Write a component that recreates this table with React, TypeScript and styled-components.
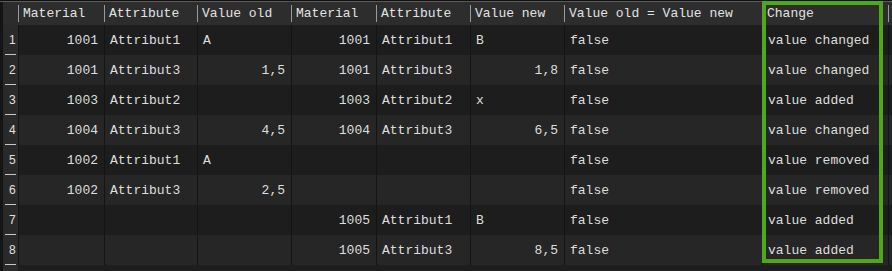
import React from 'react'
import styled, { createGlobalStyle } from 'styled-components'

type Row = {
  matOld: string
  attrOld: string
  valOld: string
  matNew: string
  attrNew: string
  valNew: string
  same: string
  change: string
}

const rows: Row[] = [
  { matOld: '1001', attrOld: 'Attribut1', valOld: 'A', matNew: '1001', attrNew: 'Attribut1', valNew: 'B', same: 'false', change: 'value changed' },
  { matOld: '1001', attrOld: 'Attribut3', valOld: '1,5', matNew: '1001', attrNew: 'Attribut3', valNew: '1,8', same: 'false', change: 'value changed' },
  { matOld: '1003', attrOld: 'Attribut2', valOld: '', matNew: '1003', attrNew: 'Attribut2', valNew: 'x', same: 'false', change: 'value added' },
  { matOld: '1004', attrOld: 'Attribut3', valOld: '4,5', matNew: '1004', attrNew: 'Attribut3', valNew: '6,5', same: 'false', change: 'value changed' },
  { matOld: '1002', attrOld: 'Attribut1', valOld: 'A', matNew: '', attrNew: '', valNew: '', same: 'false', change: 'value removed' },
  { matOld: '1002', attrOld: 'Attribut3', valOld: '2,5', matNew: '', attrNew: '', valNew: '', same: 'false', change: 'value removed' },
  { matOld: '', attrOld: '', valOld: '', matNew: '1005', attrNew: 'Attribut1', valNew: 'B', same: 'false', change: 'value added' },
  { matOld: '', attrOld: '', valOld: '', matNew: '1005', attrNew: 'Attribut3', valNew: '8,5', same: 'false', change: 'value added' },
]

const headers = [
  'Material',
  'Attribute',
  'Value old',
  'Material',
  'Attribute',
  'Value new',
  'Value old = Value new',
  'Change',
]

// numeric columns are right aligned, like a spreadsheet
const isNumber = (v: string) => /^[\d,]+$/.test(v)

export default function App() {
  return (
    <>
      <GlobalStyle />
      <Frame>
        <Grid>
          <HeadCorner />
          {headers.map((h, i) => (
            <HeadCell key={i}>{h}</HeadCell>
          ))}
          <HeadCell />
          {rows.map((r, i) => {
            const values = [r.matOld, r.attrOld, r.valOld, r.matNew, r.attrNew, r.valNew, r.same, r.change]
            return (
              <React.Fragment key={i}>
                <RowNumber>{i + 1}</RowNumber>
                {values.map((v, j) => (
                  <Cell key={j} $odd={i % 2 === 0} $right={isNumber(v)}>
                    {v}
                  </Cell>
                ))}
                <Cell $odd={i % 2 === 0} $right={false} />
              </React.Fragment>
            )
          })}
          <RowNumber $blank />
        </Grid>
        <Highlight />
      </Frame>
    </>
  )
}

const GlobalStyle = createGlobalStyle`
  html, body {
    margin: 0;
    padding: 0;
    background: #1e1e1e;
  }
`

const Frame = styled.div`
  position: relative;
  width: 892px;
  height: 271px;
  overflow: hidden;
  background: #1e1e1e;
  border-top: 1px solid #101010;
  box-sizing: border-box;
`

const Grid = styled.div`
  display: grid;
  grid-template-columns: 18px 86px 93px 94px 85px 94px 94px 198px 126px 4px;
  grid-template-rows: 23px repeat(8, 30px) 10px;
  border-top: 1px solid #5a5a5a;
  font-family: 'Liberation Mono', 'Courier New', monospace;
  font-size: 13px;
  color: #dedede;
`

const HeadCorner = styled.div`
  background: #2c2c2c;
  border-left: 3px solid #141414;
`

const HeadCell = styled.div`
  display: flex;
  align-items: center;
  padding: 0 5px;
  background: #2d2d2d;
  white-space: nowrap;
  overflow: hidden;
  position: relative;
  color: #e2e2e2;

  &::before {
    content: '';
    position: absolute;
    left: 0;
    top: 3px;
    bottom: 3px;
    width: 1px;
    background: #9a9a9a;
  }
`

const RowNumber = styled.div<{ $blank?: boolean }>`
  display: flex;
  align-items: center;
  padding-left: 6px;
  background: #2a2a2a;
  border-left: 3px solid #141414;
  font-family: 'Liberation Sans', Arial, sans-serif;
  font-size: 12px;
  color: #e0e0e0;
  position: relative;

  &::after {
    content: '';
    display: ${props => (props.$blank ? 'none' : 'block')};
    position: absolute;
    left: 2px;
    right: 2px;
    bottom: 0;
    height: 1px;
    background: #c8c8c8;
  }
`

const Cell = styled.div<{ $odd: boolean; $right: boolean }>`
  display: flex;
  align-items: center;
  justify-content: ${props => (props.$right ? 'flex-end' : 'flex-start')};
  padding: 0 6px 0 5px;
  background: ${props => (props.$odd ? '#1d1d1d' : '#262626')};
  border-left: 1px solid #141414;
  white-space: nowrap;
  overflow: hidden;
`

const Highlight = styled.div`
  position: absolute;
  left: 762px;
  top: 0;
  width: 121px;
  height: 262px;
  border: 4px solid #50a818;
  box-sizing: border-box;
  pointer-events: none;
`
